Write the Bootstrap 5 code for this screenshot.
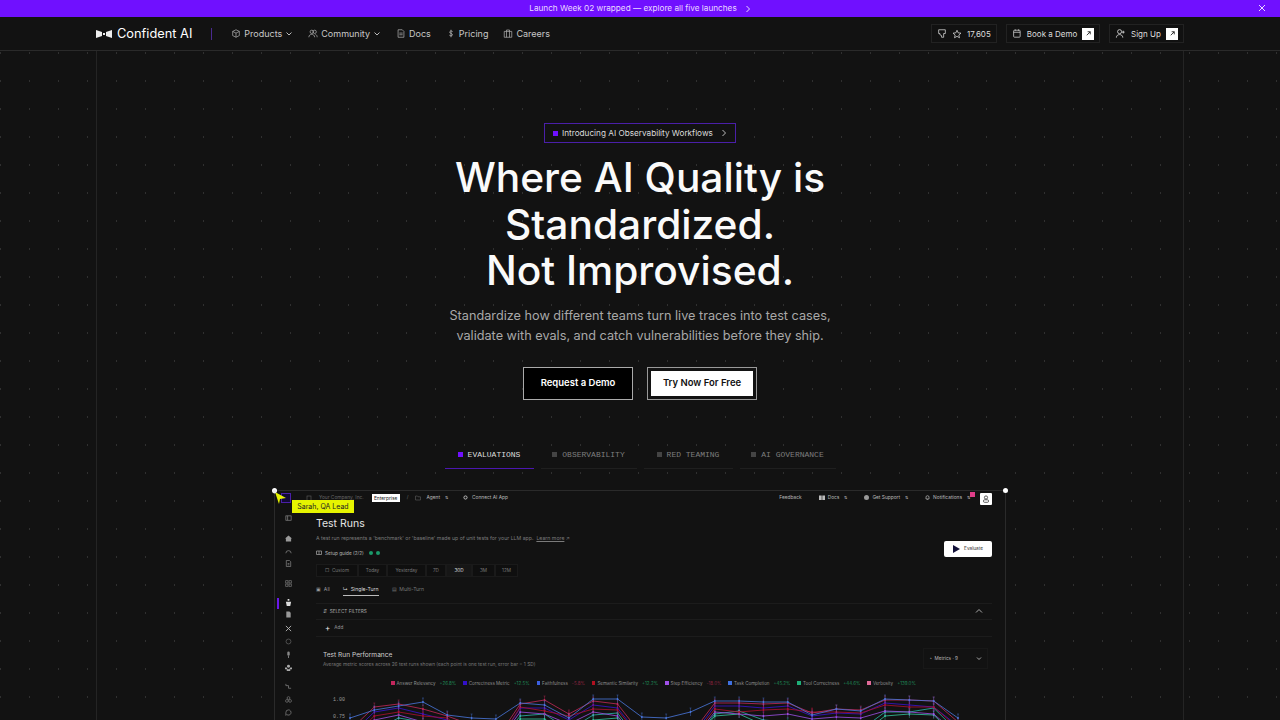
<!doctype html>
<html lang="en"><head><meta charset="utf-8"><title>Confident AI</title>
<link href="https://cdn.jsdelivr.net/npm/bootstrap@5.3.0/dist/css/bootstrap.min.css" rel="stylesheet">
<style>
html,body{height:720px;overflow:hidden}
body{background:#121212;color:#fff;font-family:"Inter","Liberation Sans",sans-serif}
.promo{height:17px;background:#7010ff;font-size:8.2px;color:#ead9ff;position:relative}
.promo-x{position:absolute;right:14px;top:4px}
.topbar{height:34px;border-bottom:1px solid #2a2a2a;padding:0 96px}
.brand-name{font-size:12.8px;color:#fff;margin-left:5px;white-space:nowrap}
.brand-rule{width:1px;height:12px;background:#4a2a90;margin:0 19px}
.nav-item-x{font-size:9px;color:#c8c8c8;gap:3px;margin-right:15px;white-space:nowrap}
.pill{height:19px;border:1px solid #222;font-size:8px;color:#ddd;padding:0 5px;gap:5px;margin-left:9px;background:#111;white-space:nowrap}
.pill-star{width:66px}.pill-demo{width:94px}.pill-sign{width:75px}
.arrow-box{width:12px;height:12px;background:#fff;display:flex;align-items:center;justify-content:center}
.stage{height:669px;position:relative;background-color:#121212;background-image:radial-gradient(circle,#303030 0.6px,transparent 1px);background-size:29px 28px;background-position:-14px -12px}
.frame{position:absolute;top:0;bottom:0;left:96px;right:96px;border-left:1px solid #242424;border-right:1px solid #242424;pointer-events:none}
.hero{position:relative;padding-top:72px}
.intro{width:192px;height:20px;border:1px solid #4a1fa8;font-size:8.2px;color:#dcdcdc;margin:0 auto;background:#121212;padding:0 8px;white-space:nowrap}
.sq{width:5px;height:5px;background:#7010ff;display:inline-block}
.hero-title{font-size:40.7px;line-height:46.5px;font-weight:500;color:#fafafa;margin:12px 0 0}
.hero-sub{font-size:12.7px;line-height:20.5px;color:#a8a8a8;margin:11px 0 0}
.cta-row{gap:14px;margin-top:20px}
.cta{width:110px;height:33px;font-size:9.5px;font-weight:600;display:flex;align-items:center;justify-content:center}
.cta-dark{background:#000;border:1px solid #aaa;color:#fff}
.cta-light{border:1px solid #999;padding:3px;background:#121212}
.cta-light span{background:#fff;color:#111;width:100%;height:100%;display:flex;align-items:center;justify-content:center}
.tabs-x{margin-top:36px;gap:7px}
.tab-x{font-family:"Liberation Mono",monospace;font-size:8px;color:#7e7e7e;height:33px;border-bottom:1px solid #1f1f1f;gap:5px;display:flex;align-items:center;justify-content:center;padding-top:6px}
.tab-x.on{color:#ddd;border-bottom-color:#4b17b0}
.tab-a{width:89px}.tab-b{width:96px}
.sqg{width:5px;height:5px;background:#444;display:inline-block}
.app{position:absolute;left:274px;top:439px;width:732px;height:231px;border-left:1px solid #2a2a2a;border-right:1px solid #2a2a2a;border-top:1px solid #2a2a2a;font-size:4.7px;color:#9a9a9a;background:#121212;white-space:nowrap}
.handle{position:absolute;width:5px;height:5px;border-radius:50%;background:#fff;top:-3px}
.handle-l{left:-3px}.handle-r{right:-3px}
.app-top{height:13px;padding-left:6px;padding-right:13px;font-size:4.85px}
.logo-box{width:10px;height:10px;background:#120a35;border:1px solid #4a1fa8}
.tb-dim{color:#666}.tb-lite{color:#b8b8b8}
.ent{background:#fff;color:#222;line-height:8px;width:28px;text-align:center;margin-left:8px}
.ud{font-size:4px;color:#b8b8b8;margin-left:5px}
.gap-r{margin-left:17px}
.ic{display:inline-block;margin-right:3px;vertical-align:-1px}
.user-box{width:12px;height:12px;background:#fff;position:relative;border-radius:1px;margin-left:10px;margin-top:2px}
.user-badge{position:absolute;left:-10px;top:-1px;width:5px;height:5px;background:#df3d88}
.side{position:absolute;left:0;top:16px;bottom:0;width:30px}
.side svg{position:absolute;left:10px}
.side-mark{position:absolute;left:2px;top:91px;width:2px;height:11px;background:#6a18e8}
.main-x{position:absolute;left:41px;top:26px;right:13px}
.tt{font-size:10.5px;color:#e4e4e4;line-height:13px}
.desc{margin-top:5px;color:#7a7a7a;font-size:5.2px}
.seg-row{margin-top:7px}
.seg{border:1px solid #1a1a1a;background:#0f0f0f;height:13px;display:flex;align-items:center;justify-content:center;color:#777}
.seg:nth-child(1){width:42px}.seg:nth-child(2){width:29px}.seg:nth-child(3){width:39px}.seg:nth-child(4){width:20px}.seg:nth-child(5){width:26px;background:#161616}.seg:nth-child(6){width:23px}.seg:nth-child(7){width:23px}
.seg.on{color:#ddd}
.tabs-mini{margin-top:6px;gap:13px;height:13px;font-size:5.1px}
.eval{position:absolute;top:50px;right:13px;width:48px;height:16px;background:#fff;color:#333;border-radius:2px;gap:4px}
.cursor{position:absolute;left:-3px;top:-2px}
.tag{position:absolute;left:17px;top:9px;background:#e6f400;color:#222;font-size:7px;padding:0 5px;height:13px;line-height:13px;width:62px;text-align:center}
.panel{border:1px solid #1c1c1c;border-width:1px 0}
.metrics-pill{height:21px;width:65px;border:1px solid #181818;color:#bbb;padding:0 5px}
.legend{gap:7px;font-size:4.5px;color:#8f8f8f}
.lsq{width:3.5px;height:3.5px;display:inline-block;margin-right:2px}
.up{color:#1f8a58;margin-left:4px}.dn{color:#8a2440;margin-left:4px}
#chart{position:absolute;left:50px;top:199px}
</style></head>
<body>
<div class="promo d-flex align-items-center justify-content-center">
  <span>Launch Week 02 wrapped — explore all five launches</span>
  <svg class="ms-2" width="6" height="8" viewBox="0 0 6 8"><path d="M1.5 1 4.5 4 1.5 7" fill="none" stroke="#ead9ff" stroke-width="1"/></svg>
  <svg class="promo-x" width="8" height="8" viewBox="0 0 8 8"><path d="M1 1 7 7M7 1 1 7" stroke="#ead9ff" stroke-width="1"/></svg>
</div>
<nav class="topbar d-flex align-items-center">
  <svg width="16" height="8" viewBox="0 0 16 8"><path d="M0 0 6 2V6L0 8ZM16 0 10 2V6L16 8Z" fill="#eee"/><rect x="7" y="3" width="2" height="2" fill="#eee"/></svg>
  <span class="brand-name">Confident AI</span>
  <span class="brand-rule"></span>
  <span class="nav-item-x d-flex align-items-center"><svg width="10" height="11" viewBox="0 0 12 12" fill="none" stroke="#bbb" stroke-width=".8"><path d="M6 1.5 10 3.5V8.5L6 10.5 2 8.5V3.5ZM2 3.5 6 5.5 10 3.5M6 5.5V10.5"/></svg>Products <svg width="8" height="6" viewBox="0 0 8 6"><path d="M1.5 1.5 4 4 6.5 1.5" fill="none" stroke="#bbb"/></svg></span>
  <span class="nav-item-x d-flex align-items-center"><svg width="10" height="11" viewBox="0 0 12 12" fill="none" stroke="#bbb" stroke-width=".8"><circle cx="4.5" cy="4" r="2"/><circle cx="8" cy="4" r="2"/><path d="M1 10.5C1 8 3 7 4.5 7S8 8 8 10.5M9 7.2C10 7.4 11 8.5 11 10.5"/></svg>Community <svg width="8" height="6" viewBox="0 0 8 6"><path d="M1.5 1.5 4 4 6.5 1.5" fill="none" stroke="#bbb"/></svg></span>
  <span class="nav-item-x d-flex align-items-center"><svg width="10" height="11" viewBox="0 0 12 12" fill="none" stroke="#bbb" stroke-width=".8"><path d="M2.5 1.5H7.5L9.5 3.5V10.5H2.5ZM4 5.5H8M4 7.5H8"/></svg>Docs</span>
  <span class="nav-item-x d-flex align-items-center"><svg width="10" height="11" viewBox="0 0 12 12" fill="none" stroke="#bbb" stroke-width=".9"><path d="M8 3.8C7.5 3 5 2.6 4.4 4 3.8 6 8 5.6 7.8 7.8 7.4 9.2 4.8 9 4 8M6 1.5V10.5"/></svg>Pricing</span>
  <span class="nav-item-x d-flex align-items-center"><svg width="10" height="11" viewBox="0 0 12 12" fill="none" stroke="#bbb" stroke-width=".8"><path d="M1.5 3.5H10.5V10.5H1.5ZM4.2 3.5V1.8H7.8V3.5M4.2 3.5V10.5M7.8 3.5V10.5"/></svg>Careers</span>
  <span class="ms-auto d-flex align-items-center">
    <span class="pill pill-star d-flex align-items-center"><svg width="10" height="11" viewBox="0 0 12 12" fill="none" stroke="#ddd" stroke-width=".9"><path d="M2 1.5H10V6H8V10.5H5.5V8.5L3.5 7.5V6H2Z"/></svg><svg width="10" height="10" viewBox="0 0 12 12" fill="none" stroke="#ddd" stroke-width=".9"><path d="M6 1.5 7.4 4.6 10.8 5 8.2 7.2 9 10.5 6 8.8 3 10.5 3.8 7.2 1.2 5 4.6 4.6Z"/></svg>17,605</span>
    <span class="pill pill-demo d-flex align-items-center"><svg width="10" height="11" viewBox="0 0 12 12" fill="none" stroke="#ddd" stroke-width=".9"><rect x="2" y="2" width="8" height="8.5" rx="1"/><path d="M2 4.5H10M4 1V2.5M8 1V2.5"/></svg>Book a Demo<span class="arrow-box ms-auto"><svg width="7" height="7" viewBox="0 0 8 8" fill="none" stroke="#222"><path d="M2 6 6 2M3 2H6V5"/></svg></span></span>
    <span class="pill pill-sign d-flex align-items-center"><svg width="11" height="11" viewBox="0 0 12 12" fill="none" stroke="#ddd" stroke-width=".9"><circle cx="5" cy="4" r="2.2"/><path d="M1.5 10.5C1.5 8 3.5 7.2 5 7.2S8.5 8 8.5 10.5M9 3V6M7.5 4.5H10.5"/></svg>Sign Up<span class="arrow-box ms-auto"><svg width="7" height="7" viewBox="0 0 8 8" fill="none" stroke="#222"><path d="M2 6 6 2M3 2H6V5"/></svg></span></span>
  </span>
</nav>
<main class="stage">
  <div class="frame"></div>
  <section class="hero text-center">
    <div class="intro d-flex align-items-center"><span class="sq"></span><span class="ms-1">Introducing AI Observability Workflows</span><svg class="ms-auto" width="6" height="8" viewBox="0 0 6 8"><path d="M1.5 1 4.5 4 1.5 7" fill="none" stroke="#bbb"/></svg></div>
    <h1 class="hero-title">Where AI Quality is<br>Standardized.<br>Not Improvised.</h1>
    <p class="hero-sub">Standardize how different teams turn live traces into test cases,<br>validate with evals, and catch vulnerabilities before they ship.</p>
    <div class="cta-row d-flex justify-content-center">
      <a class="cta cta-dark text-decoration-none">Request a Demo</a>
      <a class="cta cta-light text-decoration-none"><span>Try Now For Free</span></a>
    </div>
    <div class="tabs-x d-flex justify-content-center">
      <div class="tab-x tab-a on"><i class="sq"></i>EVALUATIONS</div>
      <div class="tab-x tab-b"><i class="sqg"></i>OBSERVABILITY</div>
      <div class="tab-x tab-a"><i class="sqg"></i>RED TEAMING</div>
      <div class="tab-x tab-b"><i class="sqg"></i>AI GOVERNANCE</div>
    </div>
  </section>
  <section class="app">
    <i class="handle handle-l"></i><i class="handle handle-r"></i>
    <div class="app-top d-flex align-items-center">
      <span class="logo-box"></span>
      <svg class="ic" style="margin-left:15px" width="6" height="6" viewBox="0 0 6 6" fill="none" stroke="#555" stroke-width=".7"><rect x="1" y="1" width="4" height="4.5"/></svg>
      <span class="tb-dim ms-1">Your Company, Inc.</span>
      <span class="ent">Enterprise</span>
      <span class="tb-dim" style="margin:0 7px">/</span>
      <svg width="6" height="6" viewBox="0 0 6 6" fill="none" stroke="#555" stroke-width=".7"><path d="M.5 1H2.5L3 1.8H5.5V5H.5Z"/></svg>
      <span class="tb-lite" style="margin-left:5px">Agent</span><span class="ud">⇅</span>
      <svg style="margin-left:15px" width="5" height="5" viewBox="0 0 5 5" fill="none" stroke="#bbb"><circle cx="2.5" cy="2.5" r="1.6"/></svg>
      <span class="tb-lite ms-1">Connect AI App</span>
      <span class="tb-lite ms-auto">Feedback</span>
      <svg class="gap-r" width="6" height="5" viewBox="0 0 6 5" fill="#bbb"><path d="M0 .5H2.7V5H0ZM3.3 .5H6V5H3.3Z"/></svg>
      <span class="tb-lite" style="margin-left:3px">Docs</span><span class="ud">⇅</span>
      <svg class="gap-r" width="5" height="5" viewBox="0 0 5 5" fill="#999"><circle cx="2.5" cy="2.5" r="2.5"/></svg>
      <span class="tb-lite" style="margin-left:3px">Get Support</span><span class="ud">⇅</span>
      <svg class="gap-r" width="5" height="5" viewBox="0 0 5 5" fill="none" stroke="#bbb" stroke-width=".7"><path d="M1 4V2.2A1.5 1.5 0 0 1 4 2.2V4ZM2 4.8H3"/></svg>
      <span class="tb-lite" style="margin-left:3px">Notifications</span><span class="ud">⇅</span>
      <span class="user-box d-flex align-items-center justify-content-center"><svg width="8" height="8" viewBox="0 0 8 8" fill="none" stroke="#333" stroke-width=".8"><circle cx="4" cy="2.5" r="1.6"/><rect x="1.5" y="4.8" width="5" height="2.5" rx="1"/></svg><i class="user-badge"></i></span>
    </div>
    <div class="side">
      <svg style="top:8px" width="7" height="7" viewBox="0 0 8 8" fill="none" stroke="#888" stroke-width=".8"><rect x="1" y="1" width="6" height="5"/><path d="M3 1V6"/></svg>
      <svg style="top:28px" width="7" height="7" viewBox="0 0 8 8" fill="#999"><path d="M4 .5 8 4H7V7.5H1V4H0Z"/></svg>
      <svg style="top:41px" width="7" height="7" viewBox="0 0 8 8" fill="none" stroke="#777"><path d="M1 6A3 3 0 1 1 7 6"/></svg>
      <svg style="top:53px" width="7" height="7" viewBox="0 0 8 8" fill="none" stroke="#888" stroke-width=".8"><path d="M1.5 .5H5L6.5 2V7.5H1.5ZM3 4H5M3 5.5H5"/></svg>
      <svg style="top:73px" width="7" height="7" viewBox="0 0 8 8" fill="none" stroke="#777" stroke-width=".8"><rect x=".8" y=".8" width="2.6" height="2.6"/><rect x="4.6" y=".8" width="2.6" height="2.6"/><rect x=".8" y="4.6" width="2.6" height="2.6"/><rect x="4.6" y="4.6" width="2.6" height="2.6"/></svg>
      <i class="side-mark"></i>
      <svg style="top:92px" width="7" height="7" viewBox="0 0 8 8" fill="#ddd"><path d="M3 0H5V2H3ZM1 3H7L6 8H2Z"/></svg>
      <svg style="top:104px" width="7" height="7" viewBox="0 0 8 8" fill="#999"><path d="M1.5 .5H5L6.5 2V7.5H1.5Z"/></svg>
      <svg style="top:118px" width="7" height="7" viewBox="0 0 8 8" fill="none" stroke="#bbb"><path d="M1 1 7 7M7 1 1 7"/></svg>
      <svg style="top:131px" width="7" height="7" viewBox="0 0 8 8" fill="none" stroke="#555"><circle cx="4" cy="4" r="2.8"/></svg>
      <svg style="top:144px" width="7" height="7" viewBox="0 0 8 8" fill="#888"><rect x="2.6" y=".5" width="2.8" height="5" rx="1.4"/><path d="M3.5 5.5H4.5V8H3.5Z"/></svg>
      <svg style="top:157px" width="7" height="7" viewBox="0 0 8 8" fill="#aaa"><circle cx="4" cy="2.5" r="1.7"/><path d="M0 4H2L3 6H5L6 4H8V6H6V8H2V6H0Z"/></svg>
      <svg style="top:176px" width="7" height="7" viewBox="0 0 8 8" fill="none" stroke="#888" stroke-width=".8"><path d="M1 1V3H4V6H7"/></svg>
      <svg style="top:189px" width="7" height="7" viewBox="0 0 8 8" fill="none" stroke="#777" stroke-width=".8"><circle cx="4" cy="2.3" r="1.6"/><circle cx="2.2" cy="5.6" r="1.6"/><circle cx="5.8" cy="5.6" r="1.6"/></svg>
      <svg style="top:202px" width="7" height="7" viewBox="0 0 8 8" fill="none" stroke="#888" stroke-width=".8"><path d="M4 1A3 3 0 1 1 2 6.3L1 7.3V4A3 3 0 0 1 4 1Z"/></svg>
    </div>
    <div class="main-x">
      <div class="tt">Test Runs</div>
      <div class="desc">A test run represents a 'benchmark' or 'baseline' made up of unit tests for your LLM app. &nbsp;<u>Learn more</u> ↗</div>
      <div class="d-flex align-items-center tb-lite" style="margin-top:7px;gap:3px"><svg width="6" height="6" viewBox="0 0 6 6" fill="none" stroke="#aaa" stroke-width=".7"><path d="M.5 1H5.5V4.5H.5ZM3 1V4.5"/></svg><span>Setup guide (2/2)</span><i class="rounded-circle" style="width:4px;height:4px;background:#1b9a6a;margin-left:2px"></i><i class="rounded-circle" style="width:4px;height:4px;background:#1b9a6a"></i></div>
      <div class="d-flex seg-row">
        <span class="seg">▢ &nbsp;Custom</span><span class="seg">Today</span><span class="seg">Yesterday</span><span class="seg">7D</span><span class="seg on">30D</span><span class="seg">3M</span><span class="seg">12M</span>
      </div>
      <div class="d-flex align-items-center tabs-mini"><span>▣ &nbsp;All</span><span style="color:#ddd;border-bottom:1px solid #bbb;line-height:12px">↳ &nbsp;Single-Turn</span><span style="color:#777">▤ &nbsp;Multi-Turn</span></div>
      <div class="panel d-flex align-items-center" style="margin-top:7px;height:17px;padding:0 7px;color:#aaa">⇵ &nbsp;SELECT FILTERS<svg class="ms-auto" width="8" height="6" viewBox="0 0 8 6" style="margin-right:2px"><path d="M1 4.5 4 1.5 7 4.5" fill="none" stroke="#aaa"/></svg></div>
      <div class="d-flex align-items-center" style="height:17px;padding-left:9px;color:#999;gap:4px;border-bottom:1px solid #1c1c1c"><span style="color:#eee;font-size:8px">+</span> Add</div>
      <div class="d-flex align-items-start" style="padding:14px 7px 0;height:29px">
        <div><div style="font-size:6.6px;color:#d0d0d0;line-height:9px">Test Run Performance</div><div style="color:#777;margin-top:1px;font-size:4.8px">Average metric scores across 26 test runs shown (each point is one test run, error bar = 1 SD)</div></div>
        <div class="metrics-pill ms-auto d-flex align-items-center" style="margin-top:-3px;margin-right:-3px">◔ &nbsp;Metrics · 9<svg class="ms-auto" width="6" height="5" viewBox="0 0 6 5"><path d="M1 1.5 3 3.5 5 1.5" fill="none" stroke="#aaa"/></svg></div>
      </div>
      <div class="legend d-flex" style="margin-top:15px;padding-left:75px">
        <span><i class="lsq" style="background:#c2265c"></i>Answer Relevancy<span class="up">+26.8%</span></span>
        <span><i class="lsq" style="background:#3210c8"></i>Correctness Metric<span class="up">+12.5%</span></span>
        <span><i class="lsq" style="background:#3b5fe0"></i>Faithfulness<span class="dn">-5.8%</span></span>
        <span><i class="lsq" style="background:#b01020"></i>Semantic Similarity<span class="up">+12.2%</span></span>
        <span><i class="lsq" style="background:#a050e8"></i>Step Efficiency<span class="dn">-18.0%</span></span>
        <span><i class="lsq" style="background:#3f70e0"></i>Task Completion<span class="up">+45.2%</span></span>
        <span><i class="lsq" style="background:#1faf78"></i>Tool Correctness<span class="up">+44.6%</span></span>
        <span><i class="lsq" style="background:#e06a98"></i>Verbosity<span class="up">+139.0%</span></span>
      </div>
    </div>
    <div class="cursor"><svg width="16" height="18" viewBox="0 0 16 18"><path d="M3 3 14 9 8 10 7 15Z" fill="#e6f400"/><circle cx="2.5" cy="2.5" r="2" fill="#eee"/></svg></div>
    <div class="tag">Sarah, QA Lead</div>
    <div class="eval d-flex align-items-center justify-content-center"><svg width="7" height="8" viewBox="0 0 7 8"><path d="M0 0 7 4 0 8Z" fill="#14123a"/></svg>Evaluate</div>
    <svg id="chart" width="660" height="30" viewBox="325 690 660 30"></svg>
  </section>
</main>
<script src="https://cdn.jsdelivr.net/npm/bootstrap@5.3.0/dist/js/bootstrap.bundle.min.js"></script>
<script>
const series=[
 ['#2ab8a8',[745,730,718,722,735,745,745,716,714,730,715,713,745,745,745,714,711,720,722,730,730,730,712,712,708,732]],
 ['#35c8a0',[745,735,722,730,740,745,745,719,719,735,720,718,745,745,745,716,714,725,728,735,735,735,716,714,715,738]],
 ['#a050e8',[738,720,715,722,728,740,745,712,714,724,712,716,745,745,742,712,714,716,714,719,717,718,711,712,714,735]],
 ['#3a14d0',[735,712,708,714,720,735,745,708,708,720,705,708,738,745,738,706,706,708,706,716,713,714,703,705,707,726]],
 ['#b01030',[740,716,712,716,718,738,745,707,711,716,709,710,740,745,740,709,712,710,709,712,712,713,705,707,707,728]],
 ['#c42a5a',[730,707,704,709,716,725,740,704,700,714,701,704,735,740,735,703,703,704,703,713,709,710,700,700,701,722]],
 ['#4a78e0',[718,710,706,702,715,718,719,703,705,718,699,699,717,718,712,701,701,702,702,715,709,711,699,700,701,718]]
];
let h='<text x="333" y="701" font-family="Liberation Mono" font-size="5" fill="#999">1.00</text><text x="333" y="718" font-family="Liberation Mono" font-size="5" fill="#999">0.75</text>';
const X=i=>350+i*24.32;
series.forEach(([c,v])=>{
 h+=`<polyline points="${v.map((y,i)=>X(i)+','+y).join(' ')}" fill="none" stroke="${c}" stroke-width=".8"/>`;
 v.forEach((y,i)=>{h+=`<path d="M${X(i)} ${y-4}V${y+4}M${X(i)-1} ${y-4}h2" stroke="${c}" stroke-width=".5" opacity=".8"/><circle cx="${X(i)}" cy="${y}" r=".9" fill="${c}"/>`;});
});
document.getElementById('chart').innerHTML=h;
</script>
</body></html>
